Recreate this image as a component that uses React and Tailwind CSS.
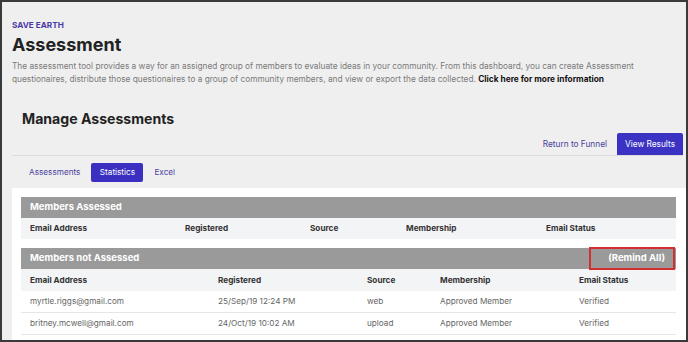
const membersAssessedCols = ['Email Address', 'Registered', 'Source', 'Membership', 'Email Status'];

const notAssessed = [
  { email: 'myrtle.riggs@gmail.com', registered: '25/Sep/19 12:24 PM', source: 'web', membership: 'Approved Member', status: 'Verified' },
  { email: 'britney.mcwell@gmail.com', registered: '24/Oct/19 10:02 AM', source: 'upload', membership: 'Approved Member', status: 'Verified' }
];

const App = () => {
  return (
    <div
      className="w-[688px] h-[342px] border-2 border-[#3a3a3a] bg-[#efefef] overflow-hidden flex flex-col"
      style={{ fontFamily: 'Inter, "Noto Sans", sans-serif' }}
    >
      {/* Page header */}
      <div className="pl-[10px] pt-[17px] pr-[3px]">
        <p className="text-[8.2px] leading-[12px] font-bold text-[#4a3aa8]">SAVE EARTH</p>
        <h1 className="mt-[3px] text-[18px] leading-[22px] font-bold text-[#222222]">Assessment</h1>
        <p className="mt-[4px] text-[8.3px] leading-[13px] text-[#7a7a7a] pr-[30px]">
          The assessment tool provides a way for an assigned group of members to evaluate ideas in your community. From this dashboard, you can create Assessment questionaires, distribute those questionaires to a group of community members, and view or export the data collected.{' '}
          <span className="font-bold text-[#111111]">Click here for more information</span>
        </p>

        <h2 className="mt-[23px] pl-[10px] text-[14.1px] leading-[20px] font-bold text-[#222222]">Manage Assessments</h2>

        <div className="mt-[4px] flex items-end justify-end gap-[10px] border-b border-[#dcdcdc]">
          <button className="mb-[5px] text-[8.3px] text-[#4b3f9a]">Return to Funnel</button>
          <button className="h-[22px] w-[66px] bg-[#3b32c4] text-white text-[8.3px] rounded-t-[2px]">View Results</button>
        </div>

        {/* Tabs */}
        <div className="mt-[7px] flex items-center gap-[11px] pl-[17px] h-[19px]">
          <button className="text-[8.2px] text-[#4c3fa0]">Assessments</button>
          <button className="h-[19px] w-[52px] bg-[#3a2fc0] text-white text-[8.2px] rounded-[2px]">Statistics</button>
          <button className="text-[8.2px] text-[#4c3fa0]">Excel</button>
        </div>
      </div>

      {/* Panel */}
      <div className="mt-[6px] ml-[10px] flex-1 bg-white pl-[9px] pr-[10px] pt-[9px]">
        {/* Members Assessed */}
        <div>
          <div className="h-[21px] bg-[#9a9a9a] flex items-center pl-[9px]">
            <span className="text-[9.5px] font-bold text-white">Members Assessed</span>
          </div>
          <div className="h-[21px] bg-[#f3f4f6] grid grid-cols-[155px_125px_96px_140px_1fr] items-center pl-[9px] text-[8.2px] font-bold text-[#333333]">
            {membersAssessedCols.map(c => (
              <span key={c}>{c}</span>
            ))}
          </div>
        </div>

        {/* Members not Assessed */}
        <div className="mt-[9px]">
          <div className="h-[21px] bg-[#9a9a9a] flex items-center justify-between pl-[9px]">
            <span className="text-[9.5px] font-bold text-white">Members not Assessed</span>
            <span className="h-[23px] -my-px mr-[1px] w-[86px] border-2 border-[#d32f2f] flex items-center justify-end pr-[8px] text-[9.5px] font-bold text-white">
              (Remind All)
            </span>
          </div>
          <div className="h-[22px] bg-[#f3f4f6] grid grid-cols-[188px_149px_73px_139px_1fr] items-center pl-[9px] text-[8.2px] font-bold text-[#333333]">
            {membersAssessedCols.map(c => (
              <span key={c}>{c}</span>
            ))}
          </div>
          {notAssessed.map(row => (
            <div
              key={row.email}
              className="h-[22px] border-b border-[#e6e6e6] grid grid-cols-[188px_149px_73px_139px_1fr] items-center pl-[9px] text-[8.2px] text-[#666666]"
            >
              <span>{row.email}</span>
              <span>{row.registered}</span>
              <span>{row.source}</span>
              <span>{row.membership}</span>
              <span>{row.status}</span>
            </div>
          ))}
        </div>
      </div>
    </div>
  );
};

export default App;
